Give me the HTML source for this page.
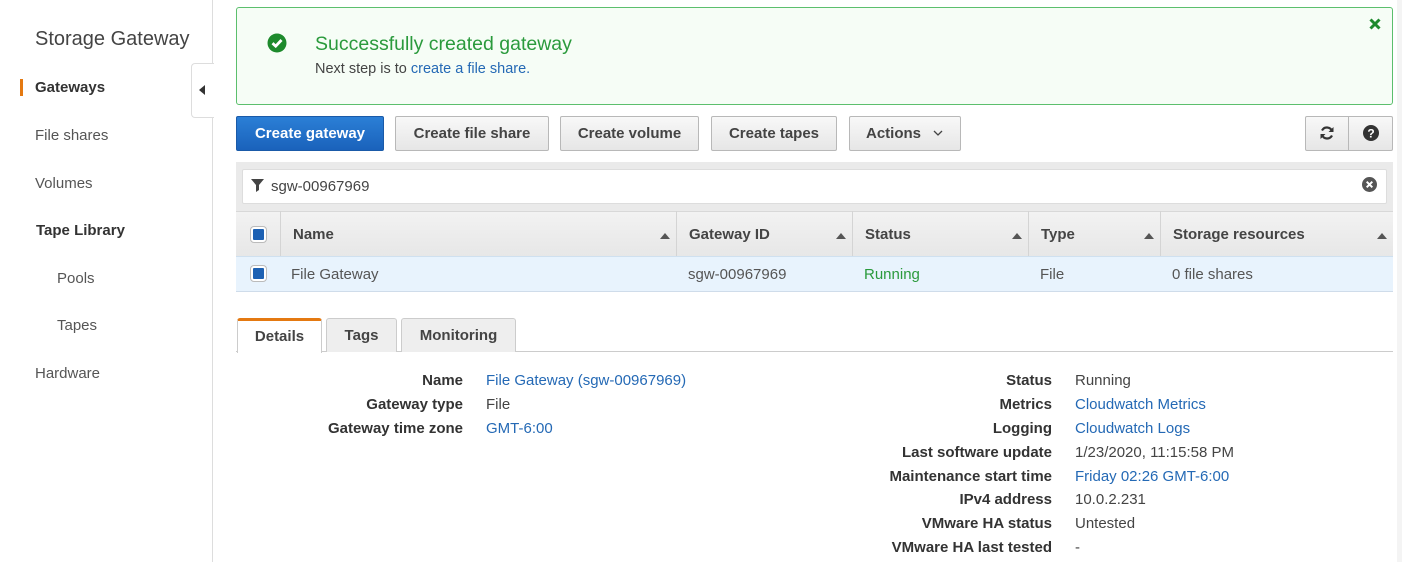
<!DOCTYPE html>
<html><head><meta charset="utf-8"><style>
*{box-sizing:border-box;margin:0;padding:0}
body{width:1402px;height:562px;overflow:hidden;background:#fff;font-family:"Liberation Sans",Arial,sans-serif;color:#444;position:relative}
.a{position:absolute}
.side{left:0;top:0;width:213px;height:562px;border-right:1px solid #ddd}
.nav{position:absolute;font-size:15px;color:#555;white-space:nowrap;line-height:18px}
.btn{position:absolute;top:116px;height:35px;border:1px solid #b8b8b8;border-radius:2px;background:linear-gradient(#f8f8f8,#e6e6e6);font-weight:bold;font-size:15px;color:#444;text-align:center;line-height:33px}
.th{position:absolute;top:211px;height:45px;border-left:1px solid #d4d4d4;font-weight:bold;font-size:15px;color:#444;line-height:47px;padding-left:12px}
.sort{position:absolute;right:6px;top:22px;width:0;height:0;border-left:5px solid transparent;border-right:5px solid transparent;border-bottom:6px solid #555}
.td{position:absolute;top:256px;height:35px;line-height:38px;font-size:15px;color:#555;padding-left:12px}
.cb{position:absolute;width:15px;height:15px;border:2px solid #fff;border-radius:3px;background:#1d61b3;box-shadow:0 0 0 1px #bbb}
.lab{position:absolute;font-weight:bold;font-size:15px;color:#333;text-align:right;white-space:nowrap}
.val{position:absolute;font-size:15px;color:#444;white-space:nowrap}
.lnk{color:#2469b5}
.tab{position:absolute;top:318px;height:34px;border:1px solid #ccc;border-bottom:none;border-radius:3px 3px 0 0;background:#eee;font-weight:bold;font-size:15px;color:#444;text-align:center;line-height:33px}
</style></head><body>
<div class="a side"></div>
<div class="a" style="left:35px;top:28px;font-size:20px;color:#444">Storage Gateway</div>
<div class="a" style="left:20px;top:79px;width:3px;height:17px;background:#e47911"></div>
<div class="nav" style="left:35px;top:79px;font-weight:bold;color:#333">Gateways</div>
<div class="nav" style="left:35px;top:127px">File shares</div>
<div class="nav" style="left:35px;top:175px">Volumes</div>
<div class="nav" style="left:36px;top:222px;font-weight:bold;color:#333">Tape Library</div>
<div class="nav" style="left:57px;top:270px">Pools</div>
<div class="nav" style="left:57px;top:317px">Tapes</div>
<div class="nav" style="left:35px;top:365px">Hardware</div>
<div class="a" style="left:191px;top:63px;width:23px;height:55px;border:1px solid #ddd;border-right:none;border-radius:4px 0 0 4px;background:#fff"></div>
<div class="a" style="left:199px;top:85px;width:0;height:0;border-top:5px solid transparent;border-bottom:5px solid transparent;border-right:6px solid #333"></div>

<div class="a" style="left:236px;top:7px;width:1157px;height:98px;border:1px solid #5cbf6d;border-radius:3px;background:#f6fdf6"></div>
<svg class="a" style="left:267px;top:33px" width="20" height="20" viewBox="0 0 20 20"><circle cx="10" cy="10" r="9.5" fill="#1d8a2c"/><path d="M5.5 10.2 L8.7 13.2 L14.5 7" stroke="#fff" stroke-width="2.8" fill="none"/></svg>
<div class="a" style="left:315px;top:33px;font-size:19.5px;color:#2a9a3c">Successfully created gateway</div>
<div class="a" style="left:315px;top:61px;font-size:14.5px;color:#444">Next step is to <span class="lnk">create a file share.</span></div>
<svg class="a" style="left:1369px;top:18px" width="12" height="12" viewBox="0 0 12 12"><path d="M1.5 1.5L10.5 10.5M10.5 1.5L1.5 10.5" stroke="#1d8a2c" stroke-width="3"/></svg>

<div class="btn" style="left:236px;width:148px;background:linear-gradient(#2b7fd6,#1a62bb);border-color:#1a5aa8;color:#fff">Create gateway</div>
<div class="btn" style="left:395px;width:154px">Create file share</div>
<div class="btn" style="left:560px;width:139px">Create volume</div>
<div class="btn" style="left:711px;width:126px">Create tapes</div>
<div class="btn" style="left:849px;width:112px;text-align:left;padding-left:16px">Actions <svg width="10" height="6" viewBox="0 0 10 6" style="margin-left:8px;vertical-align:2px"><path d="M1 1L5 5L9 1" stroke="#444" stroke-width="1.3" fill="none"/></svg></div>
<div class="btn" style="left:1305px;width:44px;border-radius:2px 0 0 2px"><svg width="16" height="16" viewBox="0 0 16 16" style="margin-top:8px"><path d="M13 6A5.5 5.5 0 0 0 3 5.5M3 10A5.5 5.5 0 0 0 13 10.5" stroke="#333" stroke-width="2.2" fill="none"/><path d="M14.5 2V7H9.5Z M1.5 14V9H6.5Z" fill="#333"/></svg></div>
<div class="btn" style="left:1348px;width:45px;border-radius:0 2px 2px 0"><svg width="16" height="16" viewBox="0 0 16 16" style="margin-top:8px"><circle cx="8" cy="8" r="8" fill="#333"/><text x="8" y="12.5" font-size="12" font-weight="bold" fill="#fff" text-anchor="middle" font-family="Liberation Sans">?</text></svg></div>

<div class="a" style="left:236px;top:162px;width:1157px;height:49px;background:#eaeaea"></div>
<div class="a" style="left:242px;top:169px;width:1145px;height:35px;background:#fff;border:1px solid #ddd;border-radius:2px"></div>
<svg class="a" style="left:251px;top:179px" width="13" height="13" viewBox="0 0 13 13"><path d="M0 0H13L8 6V11L5 13V6Z" fill="#444"/></svg>
<div class="a" style="left:271px;top:178px;font-size:15px;color:#444">sgw-00967969</div>
<svg class="a" style="left:1362px;top:177px" width="15" height="15" viewBox="0 0 15 15"><circle cx="7.5" cy="7.5" r="7.5" fill="#555"/><path d="M4.7 4.7L10.3 10.3M10.3 4.7L4.7 10.3" stroke="#fff" stroke-width="2"/></svg>

<div class="a" style="left:236px;top:211px;width:1157px;height:45px;background:linear-gradient(#f2f2f2,#e7e7e7);border-top:1px solid #d8d8d8"></div>
<div class="cb" style="left:251px;top:227px"></div>
<div class="th" style="left:280px;width:396px">Name<i class="sort"></i></div>
<div class="th" style="left:676px;width:176px">Gateway ID<i class="sort"></i></div>
<div class="th" style="left:852px;width:176px">Status<i class="sort"></i></div>
<div class="th" style="left:1028px;width:132px">Type<i class="sort"></i></div>
<div class="th" style="left:1160px;width:233px">Storage resources<i class="sort"></i></div>
<div class="a" style="left:236px;top:256px;width:1157px;height:36px;background:#e8f3fd;border-top:1px solid #cfe0ef;border-bottom:1px solid #cfdcea"></div>
<div class="cb" style="left:251px;top:266px"></div>
<div class="td" style="left:279px">File Gateway</div>
<div class="td" style="left:676px">sgw-00967969</div>
<div class="td" style="left:852px;color:#2a9a3c">Running</div>
<div class="td" style="left:1028px">File</div>
<div class="td" style="left:1160px">0 file shares</div>

<div class="a" style="left:236px;top:351px;width:1157px;height:1px;background:#ccc"></div>
<div class="tab" style="left:237px;width:85px;background:#fff;border-top:3px solid #e47911;height:35px;line-height:31px">Details</div>
<div class="tab" style="left:326px;width:71px">Tags</div>
<div class="tab" style="left:401px;width:115px">Monitoring</div>

<div class="lab" style="right:939px;top:372px">Name</div>
<div class="lab" style="right:939px;top:396px">Gateway type</div>
<div class="lab" style="right:939px;top:420px">Gateway time zone</div>
<div class="val lnk" style="left:486px;top:372px">File Gateway (sgw-00967969)</div>
<div class="val" style="left:486px;top:396px">File</div>
<div class="val lnk" style="left:486px;top:420px">GMT-6:00</div>

<div class="lab" style="right:350px;top:372px">Status</div>
<div class="lab" style="right:350px;top:396px">Metrics</div>
<div class="lab" style="right:350px;top:420px">Logging</div>
<div class="lab" style="right:350px;top:444px">Last software update</div>
<div class="lab" style="right:350px;top:468px">Maintenance start time</div>
<div class="lab" style="right:350px;top:491px">IPv4 address</div>
<div class="lab" style="right:350px;top:515px">VMware HA status</div>
<div class="lab" style="right:350px;top:539px">VMware HA last tested</div>
<div class="val" style="left:1075px;top:372px">Running</div>
<div class="val lnk" style="left:1075px;top:396px">Cloudwatch Metrics</div>
<div class="val lnk" style="left:1075px;top:420px">Cloudwatch Logs</div>
<div class="val" style="left:1075px;top:444px">1/23/2020, 11:15:58 PM</div>
<div class="val lnk" style="left:1075px;top:468px">Friday 02:26 GMT-6:00</div>
<div class="val" style="left:1075px;top:491px">10.0.2.231</div>
<div class="val" style="left:1075px;top:515px">Untested</div>
<div class="val" style="left:1075px;top:539px">-</div>
<div class="a" style="left:1397px;top:0;width:5px;height:562px;background:#f4f4f4"></div>
</body></html>
